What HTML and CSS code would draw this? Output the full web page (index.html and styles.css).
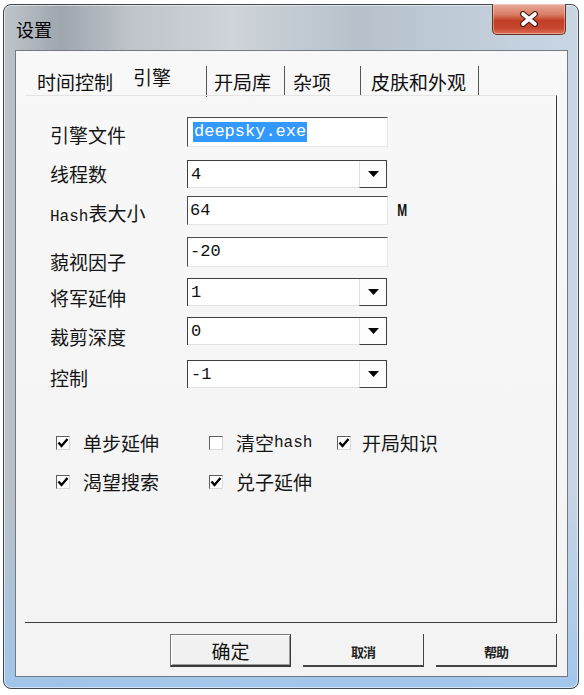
FILE: index.html
```html
<!DOCTYPE html>
<html lang="zh-CN">
<head>
<meta charset="utf-8">
<title>设置</title>
<link rel="stylesheet" href="styles.css">
</head>
<body>
<div class="window">
  <div class="titlebar">
    <span class="title">设置</span>
    <div class="close">
      <svg width="22" height="16" viewBox="0 0 22 16">
        <path d="M5 3 L17 13 M17 3 L5 13" stroke="#4a1e18" stroke-width="6" stroke-linecap="round" fill="none"/>
        <path d="M5 3 L17 13 M17 3 L5 13" stroke="#ffffff" stroke-width="3.6" stroke-linecap="round" fill="none"/>
      </svg>
    </div>
  </div>
  <div class="client">
    <div class="tabs">
      <div class="tab t1">时间控制</div>
      <div class="tab t2 active">引擎</div>
      <div class="tab t3">开局库</div>
      <div class="tab t4">杂项</div>
      <div class="tab t5">皮肤和外观</div>
    </div>
    <div class="panel">
      <div class="form">
        <div class="row r1">
          <span class="lbl">引擎文件</span>
          <div class="field h30"><span class="sel">deepsky.exe</span></div>
        </div>
        <div class="row r2">
          <span class="lbl">线程数</span>
          <div class="combo"><span class="val">4</span><span class="drop"><svg width="11" height="6" viewBox="0 0 11 6"><path d="M0 0 H11 L5.5 6 Z" fill="#000"/></svg></span></div>
        </div>
        <div class="row r3">
          <span class="lbl"><span class="mono">Hash</span>表大小</span>
          <div class="field h29"><span class="val">64</span></div>
          <span class="unit">M</span>
        </div>
        <div class="row r4">
          <span class="lbl">藐视因子</span>
          <div class="field h30"><span class="val">-20</span></div>
        </div>
        <div class="row r5">
          <span class="lbl">将军延伸</span>
          <div class="combo"><span class="val">1</span><span class="drop"><svg width="11" height="6" viewBox="0 0 11 6"><path d="M0 0 H11 L5.5 6 Z" fill="#000"/></svg></span></div>
        </div>
        <div class="row r6">
          <span class="lbl">裁剪深度</span>
          <div class="combo"><span class="val">0</span><span class="drop"><svg width="11" height="6" viewBox="0 0 11 6"><path d="M0 0 H11 L5.5 6 Z" fill="#000"/></svg></span></div>
        </div>
        <div class="row r7">
          <span class="lbl">控制</span>
          <div class="combo"><span class="val">-1</span><span class="drop"><svg width="11" height="6" viewBox="0 0 11 6"><path d="M0 0 H11 L5.5 6 Z" fill="#000"/></svg></span></div>
        </div>
      </div>
      <div class="checks">
        <label class="chk"><span class="box"><svg width="12" height="12" viewBox="0 0 12 12"><path d="M1.5 5.5 L4.5 9 L10.5 2" stroke="#000" stroke-width="2.4" fill="none"/></svg></span>单步延伸</label>
        <label class="chk"><span class="box"></span>清空<span class="mono">hash</span></label>
        <label class="chk c3"><span class="box"><svg width="12" height="12" viewBox="0 0 12 12"><path d="M1.5 5.5 L4.5 9 L10.5 2" stroke="#000" stroke-width="2.4" fill="none"/></svg></span>开局知识</label>
        <label class="chk"><span class="box"><svg width="12" height="12" viewBox="0 0 12 12"><path d="M1.5 5.5 L4.5 9 L10.5 2" stroke="#000" stroke-width="2.4" fill="none"/></svg></span>渴望搜索</label>
        <label class="chk"><span class="box"><svg width="12" height="12" viewBox="0 0 12 12"><path d="M1.5 5.5 L4.5 9 L10.5 2" stroke="#000" stroke-width="2.4" fill="none"/></svg></span>兑子延伸</label>
      </div>
    </div>
    <div class="buttons">
      <div class="btn ok">确定</div>
      <div class="btn flat">取消</div>
      <div class="btn flat">帮助</div>
    </div>
  </div>
</div>
</body>
</html>
```

FILE: styles.css
```css
* { box-sizing: border-box; }
html, body { margin: 0; padding: 0; background: #ffffff; }
body {
  width: 584px;
  height: 695px;
  font-family: "Noto Sans CJK SC", "Liberation Sans", sans-serif;
  color: #111;
}
.window {
  margin: 4px 0 0 3px;
  width: 576px;
  height: 685px;
  border: 1px solid #3f474f;
  border-radius: 8px 8px 8px 8px;
  box-shadow: inset 0 0 0 1px rgba(255,255,255,0.55);
  background:
    linear-gradient(to bottom, rgba(175,208,240,0) 0%, rgba(175,208,240,0) 70%, rgba(160,198,236,0.95) 100%),
    linear-gradient(90deg, #bfc4c9 0%, #9ea6ae 10%, #bec4ca 22%, #ced4d9 40%, #b6c1cb 62%, #c2cfdb 85%, #c8d6e4 100%);
  display: flex;
  flex-direction: column;
}
.titlebar {
  height: 45px;
  display: flex;
  align-items: flex-start;
  justify-content: space-between;
  padding-left: 12px;
}
.title {
  font-size: 18px;
  line-height: 20px;
  margin-top: 14px;
  color: #000;
}
.close {
  width: 74px;
  height: 31px;
  margin: -1px 12px 0 0;
  border: 1px solid #6e3024;
  border-top: none;
  border-radius: 0 0 5px 5px;
  background: linear-gradient(to bottom, #e8ab9b 0%, #d97e66 35%, #c23e26 55%, #c6472e 80%, #dc7057 100%);
  box-shadow: inset 0 0 0 1px rgba(255,255,255,0.35);
  display: flex;
  align-items: center;
  justify-content: center;
}
.client {
  margin: 0 10px 0 11px;
  height: 627px;
  border: 1px solid #6f7a86;
  background: linear-gradient(to bottom, #f8f8f8, #f3f3f3);
  padding: 15px 10px 0 9px;
  display: flex;
  flex-direction: column;
}
.tabs {
  height: 29px;
  display: flex;
  align-items: stretch;
}
.tab {
  height: 29px;
  font-size: 19px;
  line-height: 20px;
  padding-top: 6px;
  color: #111;
  border-right: 1px solid #555;
  white-space: nowrap;
}
.t1 { width: 99px; padding-left: 12px; border-right: none; }
.t2 { width: 83px; padding-left: 9px; padding-top: 1px; height: 31px; }
.t3 { width: 78px; padding-left: 7px; }
.t4 { width: 76px; padding-left: 8px; }
.t5 { width: 118px; padding-left: 10px; }
.panel {
  height: 528px;
  border-top: 1px solid #e4e4e4;
  border-right: 1px solid #3c3c3c;
  border-bottom: 1px solid #3c3c3c;
  padding: 21px 0 0 25px;
}
.form { display: flex; flex-direction: column; }
.row {
  display: flex;
  align-items: flex-start;
  height: 28px;
}
.lbl {
  width: 137px;
  font-size: 19px;
  line-height: 20px;
  white-space: nowrap;
  color: #151515;
}
.mono { font-family: "Liberation Mono", "DejaVu Sans Mono", monospace; font-size: 16px; }
.r1 .lbl { padding-top: 8px; }
.r2 { margin-top: 15px; }
.r2 .lbl { padding-top: 4px; }
.r3 { margin-top: 8px; }
.r3 .lbl { padding-top: 7px; }
.r4 { margin-top: 13px; }
.r4 .lbl { padding-top: 15px; }
.r5 { margin-top: 13px; }
.r5 .lbl { padding-top: 10px; }
.r6 { margin-top: 11px; }
.r6 .lbl { padding-top: 10px; }
.r7 { margin-top: 15px; }
.r7 .lbl { padding-top: 8px; }
.field {
  width: 201px;
  background: #fff;
  border-top: 1px solid #4a4a4a;
  border-left: 1px solid #4a4a4a;
  border-right: 1px solid #e6e6e6;
  border-bottom: 1px solid #e6e6e6;
  display: flex;
  align-items: center;
  padding-left: 2px;
  flex-shrink: 0;
}
.h30 { height: 30px; }
.h29 { height: 29px; }
.val {
  font-family: "Liberation Mono", "DejaVu Sans Mono", monospace;
  font-size: 17px;
  line-height: 20px;
  color: #111;
}
.sel {
  font-family: "Liberation Mono", "DejaVu Sans Mono", monospace;
  font-size: 17px;
  line-height: 20px;
  background: #3399ff;
  color: #fff;
  padding: 0 1px;
  margin-left: 3px;
}
.unit {
  font-family: "Liberation Sans", sans-serif;
  font-weight: bold;
  font-size: 17px;
  line-height: 16px;
  margin: 7px 0 0 7px;
  transform: scaleX(0.7);
}
.combo {
  width: 200px;
  height: 28px;
  background: #fff;
  border-top: 1px solid #3f3f3f;
  border-left: 1px solid #3f3f3f;
  display: flex;
  align-items: stretch;
  flex-shrink: 0;
}
.combo .val {
  flex: 1;
  padding-left: 3px;
  padding-top: 4px;
  border-bottom: 1px solid #e2e2e2;
}
.drop {
  width: 28px;
  border-left: 1px solid #e2e2e2;
  border-right: 1px solid #3f3f3f;
  border-bottom: 1px solid #3f3f3f;
  background: #fdfdfd;
  display: flex;
  align-items: center;
  justify-content: center;
}
.checks {
  margin: 43px 0 0 6px;
  display: grid;
  grid-template-columns: 153px 128px auto;
  row-gap: 15px;
}
.chk {
  height: 24px;
  display: flex;
  align-items: center;
  font-size: 19px;
  line-height: 20px;
  white-space: nowrap;
  color: #151515;
}
.chk .mono { font-size: 16px; }
.box {
  width: 14px;
  height: 14px;
  margin-right: 13px;
  background: #fff;
  border-top: 1px solid #5e5e5e;
  border-left: 1px solid #5e5e5e;
  border-right: 1px solid #d8d8d8;
  border-bottom: 1px solid #d8d8d8;
  display: flex;
  align-items: center;
  justify-content: center;
  flex-shrink: 0;
}
.c3 .box { margin-right: 11px; }
.buttons {
  margin-top: 11px;
  display: flex;
  justify-content: flex-end;
  gap: 12px;
}
.btn {
  width: 121px;
  height: 33px;
  display: flex;
  align-items: center;
  justify-content: center;
}
.ok {
  font-size: 19px;
  border: 1px solid #777;
  border-right-color: #3a3a3a;
  border-bottom: 2px solid #3a3a3a;
  box-shadow: inset 1px 1px 0 #fff, inset -1px -1px 0 #9a9a9a;
  background: #f1f1f1;
  color: #111;
}
.flat {
  font-size: 13px;
  font-weight: bold;
  letter-spacing: -1px;
  border-right: 1px solid #444;
  border-bottom: 2px solid #444;
  padding-top: 4px;
  color: #222;
}
```
